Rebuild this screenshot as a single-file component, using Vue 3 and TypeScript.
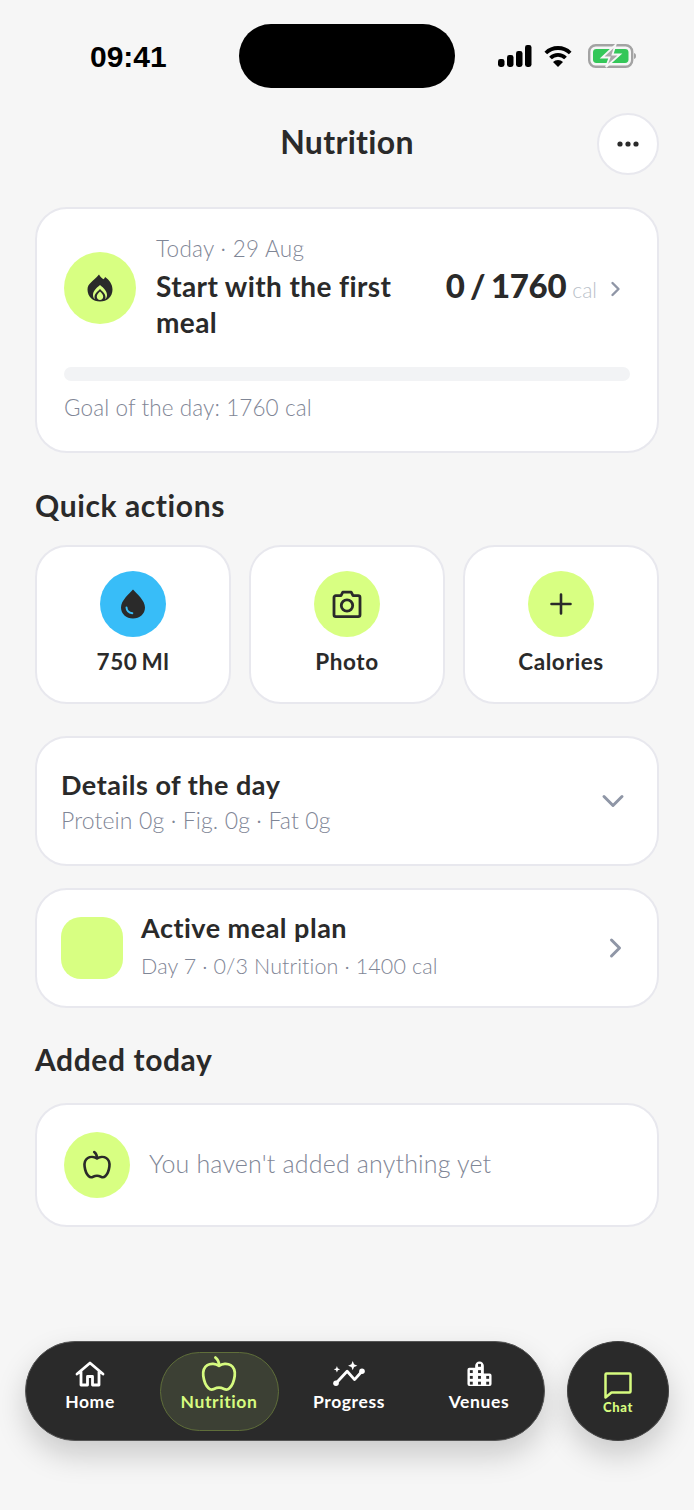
<template>
  <div class="screen">
    <!-- Status bar -->
    <div class="status">
      <span class="status__time">09:41</span>
      <div class="status__island"></div>
      <div class="status__icons">
        <svg width="34" height="22" viewBox="0 0 34 22">
          <rect x="0" y="14" width="6.500" height="8" rx="2.400" fill="#000" />
          <rect x="9" y="10" width="6.500" height="12" rx="2.400" fill="#000" />
          <rect x="18" y="6" width="6.500" height="16" rx="2.400" fill="#000" />
          <rect x="27" y="0" width="6.500" height="22" rx="2.400" fill="#000" />
        </svg>
        <svg class="status__wifi" width="28" height="22" viewBox="0 0 28 22">
          <path d="M1.800 8a17.400 17.400 0 0 1 24.400 0" fill="none" stroke="#000" stroke-width="3.800" />
          <path d="M6.500 13a10.600 10.600 0 0 1 15 0" fill="none" stroke="#000" stroke-width="3.800" />
          <path d="M14 22l-5-5a7 7 0 0 1 10 0z" fill="#000" />
        </svg>
        <svg class="status__battery" width="48" height="24" viewBox="0 0 48 24">
          <rect x="1.200" y="1.200" width="43" height="21.600" rx="6.500" fill="none" stroke="#a3a3a3" stroke-width="2.400" />
          <rect x="5" y="5" width="35.500" height="14" rx="3.400" fill="#34c759" />
          <path d="M46 9c1.500.4 2 1.500 2 3s-.5 2.600-2 3z" fill="#a3a3a3" />
          <path d="M27.500 1L14 13.500h7.500L18 23l14-12.500h-7.500z" fill="#a8a8a8" stroke="#f6f6f6" stroke-width="1.800" />
        </svg>
      </div>
    </div>

    <!-- Header -->
    <header class="header">
      <h1 class="header__title">Nutrition</h1>
      <button class="header__more" aria-label="More">
        <svg width="22" height="6" viewBox="0 0 22 6">
          <circle cx="3" cy="3" r="2.600" fill="#2a2a2a" />
          <circle cx="11" cy="3" r="2.600" fill="#2a2a2a" />
          <circle cx="19" cy="3" r="2.600" fill="#2a2a2a" />
        </svg>
      </button>
    </header>

    <main class="content">
      <!-- Hero -->
      <section class="card hero">
        <div class="hero__top">
          <div class="dot dot--lime dot--big">
            <svg width="26" height="28" viewBox="0 0 26 28">
              <path
                fill="#2a2a2a"
                fill-rule="evenodd"
                d="M12 .5c1.500 2.500 3 4 4.500 4.800.8-.5 1.300-1.300 1.600-2.300C22.500 6 25.500 10.500 25.500 15.500 25.500 22.800 20 27.500 13 27.500S.5 22.800.5 15.500C.5 9.500 6 7.500 12 .5ZM13 11c-3.800 3-7 6.300-7 10 0 1.800.7 3.300 1.900 4.300-.3-.7-.4-1.400-.4-2.100 0-3.500 3-5.600 5.500-8.200 2.500 2.600 5.500 4.700 5.500 8.200 0 .7-.1 1.400-.4 2.100 1.200-1 1.900-2.500 1.900-4.300 0-3.700-3.200-7-7-10ZM13 17.500c-1.800 1.800-3.200 3.300-3.200 5.200 0 1.900 1.400 3.300 3.200 3.300s3.200-1.400 3.200-3.300c0-1.900-1.400-3.400-3.200-5.200Z"
              />
            </svg>
          </div>
          <div class="hero__text">
            <div class="hero__date">Today · 29 Aug</div>
            <div class="hero__title">Start with the first meal</div>
          </div>
          <div class="hero__count">
            <span class="hero__num">0 / 1760</span>
            <span class="hero__unit">cal</span>
            <svg class="hero__chev" width="12" height="18" viewBox="0 0 12 18">
              <path d="M2.500 3l6 6-6 6" fill="none" stroke="#8f96a6" stroke-width="2.400" stroke-linecap="round" stroke-linejoin="round" />
            </svg>
          </div>
        </div>
        <div class="hero__bar"></div>
        <div class="muted hero__goal">Goal of the day: 1760 cal</div>
      </section>

      <h2 class="section-title section-title--quick">Quick actions</h2>
      <div class="quick">
        <div v-for="a in actions" :key="a.label" class="card quick__item">
          <div class="dot dot--action" :class="a.blue ? 'dot--blue' : 'dot--lime'">
            <svg v-if="a.icon === 'drop'" width="26" height="30" viewBox="0 0 26 30">
              <path d="M13 .5C9 5 1 11.500 1 18.500 1 25 6.300 29.500 13 29.500S25 25 25 18.500C25 11.500 17 5 13 .5Z" fill="#2a2a2a" />
              <path d="M6.500 18.500c.2 3.200 2.300 5.300 5.800 5.700" fill="none" stroke="#38bdf8" stroke-width="2" stroke-linecap="round" />
            </svg>
            <svg v-else-if="a.icon === 'camera'" width="30" height="28" viewBox="0 0 30 28">
              <path d="M2 7.500c0-1 .8-1.800 1.800-1.800H9L10.800 2.200h8.400L21 5.700h5.200c1 0 1.800.8 1.800 1.800v17.300c0 1-.8 1.800-1.800 1.800H3.800c-1 0-1.800-.8-1.800-1.800Z" fill="none" stroke="#2a2a2a" stroke-width="2.800" stroke-linejoin="round" />
              <circle cx="15" cy="15.500" r="5.700" fill="none" stroke="#2a2a2a" stroke-width="2.800" />
            </svg>
            <svg v-else width="22" height="22" viewBox="0 0 22 22">
              <path d="M11 1.500v19M1.500 11h19" fill="none" stroke="#2a2a2a" stroke-width="2.600" stroke-linecap="round" />
            </svg>
          </div>
          <span class="quick__label">{{ a.label }}</span>
        </div>
      </div>

      <section class="card details">
        <div>
          <div class="row-title">Details of the day</div>
          <div class="muted details__sub">Protein 0g · Fig. 0g · Fat 0g</div>
        </div>
        <svg width="24" height="16" viewBox="0 0 24 16">
          <path d="M3 3.500l9 9 9-9" fill="none" stroke="#8f96a6" stroke-width="3" stroke-linecap="round" stroke-linejoin="round" />
        </svg>
      </section>

      <section class="card plan">
        <div class="plan__thumb"></div>
        <div class="plan__text">
          <div class="row-title">Active meal plan</div>
          <div class="muted plan__sub">Day 7 · 0/3 Nutrition · 1400 cal</div>
        </div>
        <svg width="16" height="22" viewBox="0 0 16 22">
          <path d="M3.500 3l8 8-8 8" fill="none" stroke="#8f96a6" stroke-width="3" stroke-linecap="round" stroke-linejoin="round" />
        </svg>
      </section>

      <h2 class="section-title section-title--added">Added today</h2>
      <section class="card empty">
        <div class="dot dot--lime dot--action">
          <svg width="30" height="30" viewBox="0 0 30 30">
            <path :d="applePath" fill="none" stroke="#2a2a2a" stroke-width="2.600" stroke-linejoin="round" />
            <path d="M15 8c0-2.200-.8-4.500-2.800-6" fill="none" stroke="#2a2a2a" stroke-width="2.600" stroke-linecap="round" />
          </svg>
        </div>
        <span class="empty__text">You haven't added anything yet</span>
      </section>
    </main>

    <!-- Bottom navigation -->
    <nav class="nav">
      <a class="nav__item">
        <svg width="30" height="26" viewBox="0 0 30 26">
          <path d="M2 13L15 2l13 11M6 10.500V24h6.500v-8.500h5V24H24V10.500" fill="none" stroke="#fff" stroke-width="2.800" stroke-linejoin="round" stroke-linecap="round" />
        </svg>
        <span>Home</span>
      </a>
      <a class="nav__item nav__item--active">
        <svg width="38" height="38" viewBox="0 0 30 30">
          <path :d="applePath" fill="none" stroke="#d6fb7f" stroke-width="2.200" stroke-linejoin="round" />
          <path d="M15 8c0-2.200-.8-4.500-2.800-6" fill="none" stroke="#d6fb7f" stroke-width="2.200" stroke-linecap="round" />
        </svg>
        <span>Nutrition</span>
      </a>
      <a class="nav__item">
        <svg width="36" height="26" viewBox="0 0 36 28">
          <path d="M4 24l12-13 8 9 8-9" fill="none" stroke="#fff" stroke-width="3" stroke-linejoin="round" stroke-linecap="round" />
          <circle cx="4" cy="24" r="3" fill="#fff" />
          <circle cx="32" cy="11" r="3" fill="#fff" />
          <path d="M22 0l1.400 3.600L27 5l-3.600 1.400L22 10l-1.400-3.600L17 5l3.600-1.400Z" fill="#fff" />
          <path d="M5 5.500l1 2.500 2.500 1-2.500 1-1 2.500-1-2.500L1.500 9 4 8Z" fill="#fff" />
        </svg>
        <span>Progress</span>
      </a>
      <a class="nav__item">
        <svg width="27" height="26" viewBox="0 0 27 27">
          <path d="M3 7h6V5a4.500 4.500 0 0 1 9 0v8h6a2 2 0 0 1 2 2v9a2 2 0 0 1-2 2H3a2 2 0 0 1-2-2V9a2 2 0 0 1 2-2Z" fill="#fff" />
          <rect v-for="w in venueWindows" :key="`${w.x}-${w.y}`" :x="w.x - 1.500" :y="w.y - 1.500" width="3" height="3" fill="#2a2a2a" />
        </svg>
        <span>Venues</span>
      </a>
    </nav>
    <a class="chat">
      <svg width="28" height="27" viewBox="0 0 28 27">
        <path d="M1.500 2.500c0-.6.4-1 1-1h23c.6 0 1 .4 1 1v17c0 .6-.4 1-1 1H7.500l-6 5Z" fill="none" stroke="#d6fb7f" stroke-width="2.500" stroke-linejoin="round" />
      </svg>
      <span>Chat</span>
    </a>
  </div>
</template>

<script setup lang="ts">
interface QuickAction {
  label: string;
  icon: 'drop' | 'camera' | 'plus';
  blue?: boolean;
}

const actions: QuickAction[] = [
  { label: '750 Ml', icon: 'drop', blue: true },
  { label: 'Photo', icon: 'camera' },
  { label: 'Calories', icon: 'plus' },
];

const applePath =
  'M15 8.500C12.500 6.800 8.500 6.300 5.800 8 3 9.800 2.200 13 2.600 16.500c.5 4 2.300 8 4.200 9.800 1.300 1.200 2.800 1.200 4.200.5 1.300-.6 2.700-1 4-1s2.700.4 4 1c1.400.7 2.900.7 4.200-.5 1.900-1.800 3.700-5.800 4.200-9.800.4-3.500-.4-6.700-3.200-8.500-2.700-1.700-6.700-1.200-9.200.5Z';

const venueWindows = [
  { x: 13.5, y: 4.5 },
  { x: 5, y: 11 },
  { x: 13.5, y: 11 },
  { x: 5, y: 17 },
  { x: 13.5, y: 17 },
  { x: 22, y: 17 },
  { x: 5, y: 23 },
  { x: 13.5, y: 23 },
  { x: 22, y: 23 },
];
</script>

<style scoped>
.screen {
  position: relative;
  width: 694px;
  height: 1510px;
  overflow: hidden;
  background: #f6f6f6;
  color: #2a2a2a;
  font-family: 'Lato', 'Noto Sans', sans-serif;
}

/* Status bar */
.status {
  display: grid;
  grid-template-columns: 1fr auto 1fr;
  align-items: center;
  height: 64px;
  padding: 24px 58px 0;
}

.status__time {
  padding: 2px 0 0 32px;
  font-family: 'Liberation Sans', sans-serif;
  font-size: 30px;
  font-weight: 700;
  color: #000;
}

.status__island {
  width: 216px;
  height: 64px;
  border-radius: 32px;
  background: #000;
}

.status__icons {
  display: flex;
  align-items: center;
  justify-content: flex-end;
}

.status__wifi {
  margin-left: 12px;
}

.status__battery {
  margin-left: 16px;
}

/* Header */
.header {
  position: relative;
  display: flex;
  align-items: center;
  justify-content: center;
  height: 62px;
  margin-top: 25px;
}

.header__title {
  margin: -6px 0 0;
  font-size: 32px;
  font-weight: 700;
  letter-spacing: 0.3px;
}

.header__more {
  position: absolute;
  right: 35px;
  top: 0;
  display: flex;
  align-items: center;
  justify-content: center;
  width: 62px;
  height: 62px;
  padding: 0;
  border: 2px solid #e8e8ee;
  border-radius: 50%;
  background: #fff;
}

/* Shared */
.content {
  display: flex;
  flex-direction: column;
  padding: 32px 35px 0;
}

.card {
  box-sizing: border-box;
  border: 2px solid #e8e8ee;
  background: #fff;
}

.dot {
  display: flex;
  flex: none;
  align-items: center;
  justify-content: center;
  border-radius: 50%;
}

.dot--lime {
  background: #d8ff82;
}

.dot--blue {
  background: #38bdf8;
}

.dot--big {
  width: 72px;
  height: 72px;
}

.dot--action {
  width: 66px;
  height: 66px;
}

.muted {
  color: #7f8696;
  font-size: 24px;
  font-weight: 300;
  letter-spacing: 0.1px;
}

.section-title {
  margin: 0;
  font-size: 30px;
  font-weight: 700;
  letter-spacing: 0.6px;
  line-height: 36px;
}

.section-title--quick {
  margin-top: 34px;
}

.section-title--added {
  margin-top: 33px;
}

.row-title {
  font-size: 27px;
  font-weight: 700;
  letter-spacing: 0.5px;
  line-height: 32px;
}

/* Hero */
.hero {
  height: 246px;
  padding: 27px 27px 0;
  border-radius: 32px;
}

.hero__top {
  display: flex;
  align-items: center;
  gap: 20px;
}

.hero__text {
  flex: 1;
  min-width: 0;
  padding-right: 10px;
}

.hero__date {
  color: #7f8696;
  font-size: 22.500px;
  font-weight: 300;
  letter-spacing: 0.3px;
  line-height: 26px;
}

.hero__title {
  margin-top: 6px;
  font-size: 28px;
  font-weight: 700;
  letter-spacing: 0.4px;
  line-height: 36px;
}

.hero__count {
  display: flex;
  align-items: baseline;
  margin: -6px 8px 0 0;
  white-space: nowrap;
}

.hero__num {
  font-size: 33px;
  font-weight: 900;
  letter-spacing: -0.3px;
  word-spacing: -2px;
}

.hero__unit {
  margin-left: 6px;
  color: #b9bfc9;
  font-size: 21px;
  font-weight: 300;
}

.hero__chev {
  margin-left: 13px;
}

.hero__bar {
  height: 14px;
  margin-top: 27px;
  border-radius: 7px;
  background: #f2f3f5;
}

.hero__goal {
  margin-top: 14px;
  font-size: 22.500px;
  line-height: 26px;
}

/* Quick actions */
.quick {
  display: grid;
  grid-template-columns: repeat(3, 1fr);
  gap: 18px;
  margin-top: 22px;
}

.quick__item {
  display: flex;
  flex-direction: column;
  align-items: center;
  height: 159px;
  padding-top: 24px;
  border-radius: 32px;
}

.quick__label {
  margin-top: 12px;
  font-size: 22.500px;
  font-weight: 700;
  letter-spacing: 0.6px;
  word-spacing: -2px;
  line-height: 26px;
}

/* Rows */
.details {
  display: flex;
  align-items: center;
  justify-content: space-between;
  height: 130px;
  margin-top: 32px;
  padding: 0 32px 0 24px;
  border-radius: 32px;
}

.details__sub {
  margin-top: 5px;
  font-size: 23px;
  letter-spacing: 0.12px;
}

.plan {
  display: flex;
  align-items: center;
  height: 120px;
  margin-top: 22px;
  padding: 0 33px 0 24px;
  border-radius: 32px;
}

.plan__thumb {
  flex: none;
  width: 62px;
  height: 62px;
  border-radius: 20px;
  background: #d8ff82;
}

.plan__text {
  flex: 1;
  margin-left: 18px;
  padding-bottom: 6px;
}

.plan__sub {
  margin-top: 9px;
  font-size: 21.500px;
  letter-spacing: 0.1px;
}

.empty {
  display: flex;
  align-items: center;
  gap: 19px;
  height: 124px;
  margin-top: 26px;
  padding: 0 27px;
  border-radius: 32px;
}

.empty__text {
  padding-bottom: 4px;
  color: #7f8696;
  font-size: 25px;
  font-weight: 300;
  letter-spacing: 0.17px;
}

/* Bottom nav */
.nav {
  position: absolute;
  left: 25px;
  top: 1341px;
  box-sizing: border-box;
  display: grid;
  grid-template-columns: 128px 130px 130px 130px;
  align-items: center;
  width: 520px;
  height: 100px;
  border: 1px solid #555;
  border-radius: 50px;
  background: #2a2a2a;
  box-shadow: 0 14px 30px rgba(0, 0, 0, 0.18);
}

.nav__item {
  display: flex;
  flex-direction: column;
  align-items: center;
  box-sizing: border-box;
  height: 79px;
  padding-top: 9px;
  color: #fff;
  font-size: 17.500px;
  font-weight: 700;
  letter-spacing: 0.6px;
  line-height: 22px;
}

.nav__item span {
  margin-top: 4px;
}

.nav__item--active {
  justify-self: center;
  width: 119px;
  padding-top: 2px;
  border: 1.500px solid #5f6e3a;
  border-radius: 40px;
  background: #3c4034;
  color: #d6fb7f;
}

.nav__item--active span {
  margin-top: -2px;
}

.chat {
  position: absolute;
  left: 567px;
  top: 1341px;
  box-sizing: border-box;
  display: flex;
  flex-direction: column;
  align-items: center;
  justify-content: center;
  width: 102px;
  height: 100px;
  padding-top: 4px;
  border: 1px solid #444;
  border-radius: 50%;
  background: #2a2a2a;
  box-shadow: 0 14px 30px rgba(0, 0, 0, 0.18);
  color: #d6fb7f;
  font-size: 13px;
  font-weight: 900;
  letter-spacing: 0.6px;
}

.chat span {
  margin-top: 0;
}
</style>

<style>
html,
body {
  background: #f6f6f6;
}
</style>
